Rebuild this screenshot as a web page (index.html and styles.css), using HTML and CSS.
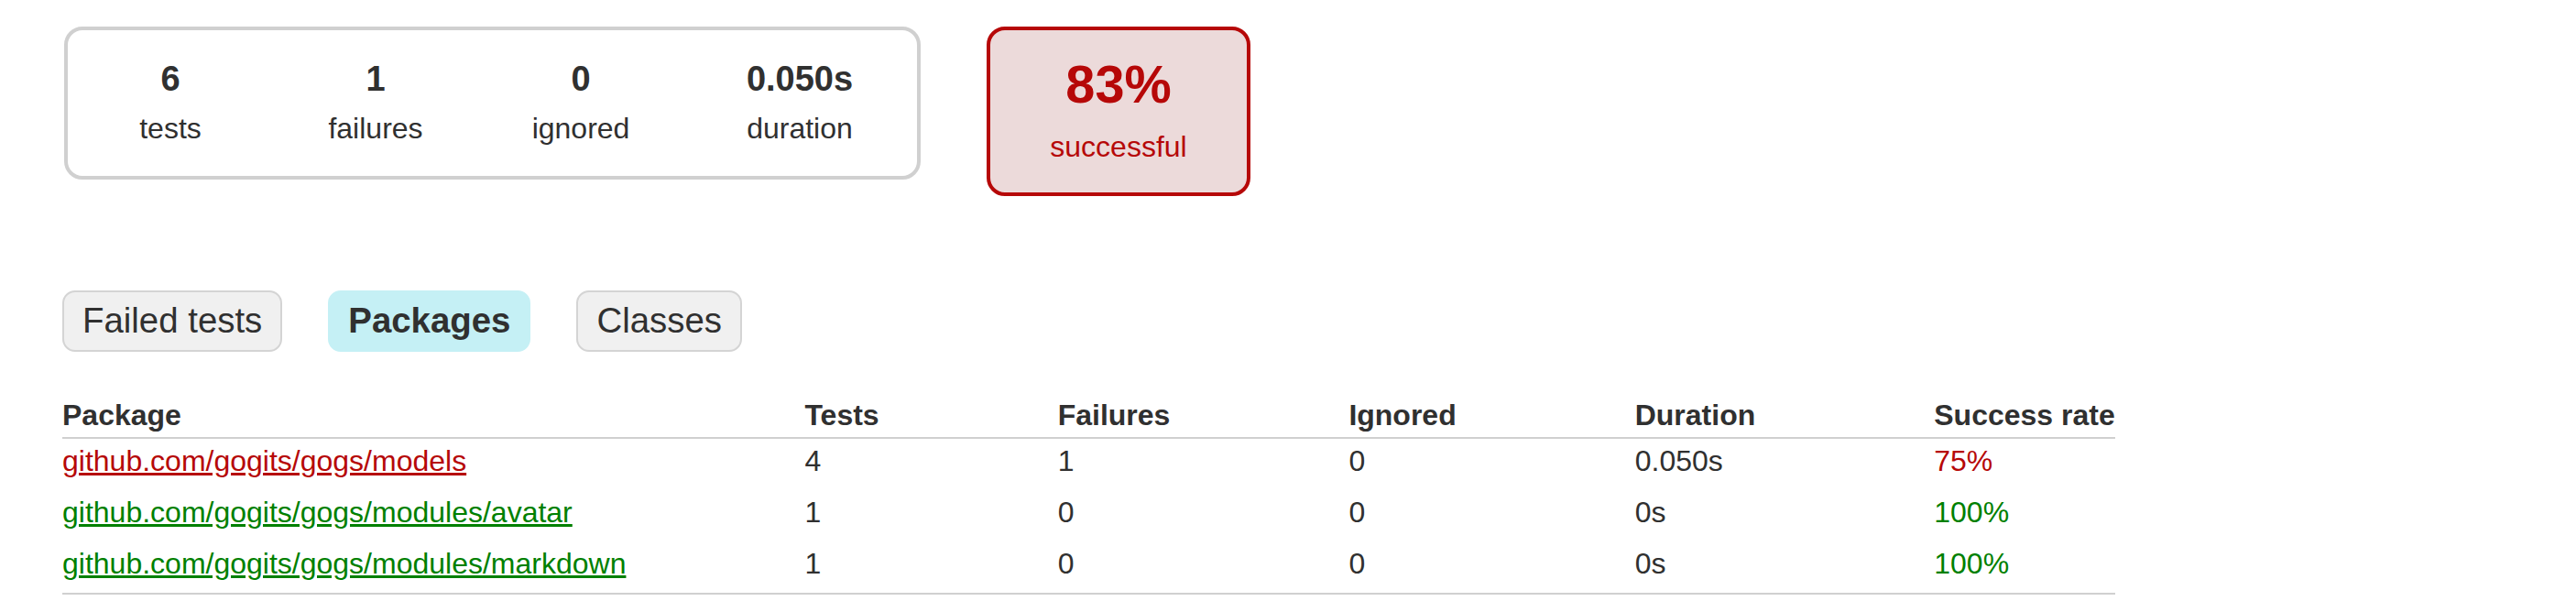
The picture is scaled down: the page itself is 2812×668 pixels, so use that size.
FILE: index.html
```html
<!DOCTYPE html>
<html>
<head>
<meta charset="utf-8">
<title>Test Summary</title>
<link rel="stylesheet" href="styles.css">
</head>
<body>
<div class="content">
  <div class="summary">
    <div class="summary-group">
      <div class="info-box"><div class="counter">6</div><p>tests</p></div>
      <div class="info-box"><div class="counter">1</div><p>failures</p></div>
      <div class="info-box"><div class="counter">0</div><p>ignored</p></div>
      <div class="info-box duration"><div class="counter">0.050s</div><p>duration</p></div>
    </div>
    <div class="success-rate failures">
      <div class="percent">83%</div>
      <p>successful</p>
    </div>
  </div>

  <ul class="tab-links">
    <li><a href="#">Failed tests</a></li>
    <li class="selected"><a href="#">Packages</a></li>
    <li><a href="#">Classes</a></li>
  </ul>

  <table class="packages">
    <thead>
      <tr>
        <th>Package</th>
        <th>Tests</th>
        <th>Failures</th>
        <th>Ignored</th>
        <th>Duration</th>
        <th>Success rate</th>
      </tr>
    </thead>
    <tbody>
      <tr>
        <td class="fail"><a href="#">github.com/gogits/gogs/models</a></td>
        <td>4</td>
        <td>1</td>
        <td>0</td>
        <td>0.050s</td>
        <td class="fail">75%</td>
      </tr>
      <tr>
        <td class="pass"><a href="#">github.com/gogits/gogs/modules/avatar</a></td>
        <td>1</td>
        <td>0</td>
        <td>0</td>
        <td>0s</td>
        <td class="pass">100%</td>
      </tr>
      <tr>
        <td class="pass"><a href="#">github.com/gogits/gogs/modules/markdown</a></td>
        <td>1</td>
        <td>0</td>
        <td>0</td>
        <td>0s</td>
        <td class="pass">100%</td>
      </tr>
    </tbody>
  </table>
</div>
</body>
</html>
```

FILE: styles.css
```css
html, body {
  margin: 0;
  padding: 0;
  background: #ffffff;
}

body {
  font-family: "Liberation Sans", Arial, Helvetica, sans-serif;
  font-size: 32px;
  color: #303030;
}

a {
  color: #303030;
}

.content {
  padding: 29px 0 0 68px;
}

.summary {
  display: flex;
  align-items: flex-start;
  gap: 72px;
  padding-left: 2px;
}

.summary-group {
  display: flex;
  gap: 4px;
  padding: 0 3px 0 2px;
  border: 4px solid #d0d0d0;
  border-radius: 20px;
}

.info-box {
  width: 220px;
  padding: 34px 0 34px;
  text-align: center;
}

.info-box.duration {
  width: 250px;
}

.info-box p,
.success-rate p {
  margin: 0;
  font-size: 32px;
  line-height: 36px;
}

.counter {
  font-size: 38px;
  line-height: 38px;
  font-weight: bold;
  margin-bottom: 17px;
}

.success-rate {
  width: 280px;
  padding: 29px 0 32px;
  text-align: center;
  border: 4px solid #b60808;
  border-radius: 20px;
  background-color: #ecdada;
  color: #b60808;
}

.percent {
  font-size: 57.6px;
  line-height: 60px;
  font-weight: bold;
  margin-bottom: 20px;
}

.tab-links {
  display: flex;
  gap: 50px;
  list-style: none;
  margin: 103px 0 0;
  padding: 0;
}

.tab-links li {
  padding: 9px 20px 11px;
  border: 2px solid #d4d4d4;
  border-radius: 14px;
  background-color: #f0f0f0;
}

.tab-links li.selected {
  background-color: #c5f0f5;
  border-color: #c5f0f5;
}

.tab-links li.selected a {
  font-weight: bold;
}

.tab-links a {
  display: block;
  font-size: 38.4px;
  line-height: 43px;
  text-decoration: none;
  color: #303030;
}

.packages {
  margin-top: 51px;
  border-collapse: collapse;
  border-bottom: 2px solid #d0d0d0;
}

.packages th {
  text-align: left;
  white-space: nowrap;
  font-size: 32px;
  line-height: 36px;
  padding: 0 0 6px 195px;
  border-bottom: 2px solid #d0d0d0;
}

.packages td {
  white-space: nowrap;
  font-size: 32px;
  line-height: 36px;
  padding: 6px 0 14px 195px;
}

.packages th:first-child,
.packages td:first-child {
  padding-left: 0;
}

.packages .fail,
.packages .fail a {
  color: #b60808;
}

.packages .pass,
.packages .pass a {
  color: #008000;
}
```
